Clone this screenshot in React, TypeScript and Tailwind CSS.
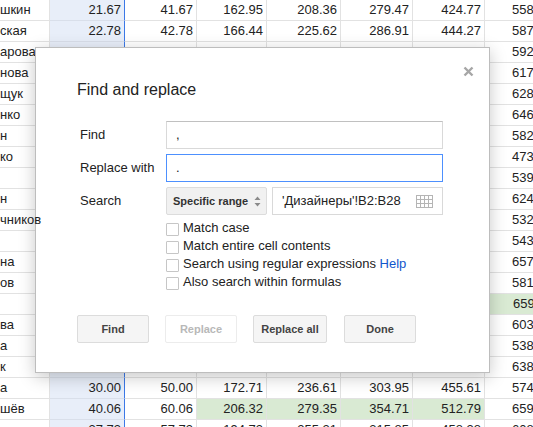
import React from "react";

const NAMES = [
  "шкин", "ская", "арова", "нова", "щук", "нко", "н", "ко", "", "н", "чников",
  "", "на", "ов", "", "ва", "а", "к", "а", "шёв", "ова",
];

const LAST = [
  "5587.42", "5873.10", "5921.64", "6170.25", "6281.93", "6463.08", "5826.71",
  "4731.56", "5394.20", "6245.87", "5320.14", "5436.92", "6572.35", "5813.47",
  "6598.11", "6037.66", "5385.29", "6389.74", "5746.50", "6591.03", "6085.48",
];

const KNOWN: Record<number, string[]> = {
  0: ["21.67", "41.67", "162.95", "208.36", "279.47", "424.77"],
  1: ["22.78", "42.78", "166.44", "225.62", "286.91", "444.27"],
  18: ["30.00", "50.00", "172.71", "236.61", "303.95", "455.61"],
  19: ["40.06", "60.06", "206.32", "279.35", "354.71", "512.79"],
  20: ["37.73", "57.73", "194.73", "255.21", "315.85", "458.38"],
};

function rowValues(i: number) {
  if (KNOWN[i]) return [...KNOWN[i], LAST[i]];
  const a = 20 + ((i * 37) % 17) + 0.33;
  const vals = [a, a + 20, a * 4 + 70, a * 5 + 110, a * 6 + 150, a * 9 + 230];
  return [...vals.map((v) => v.toFixed(2)), LAST[i]];
}

const COLS = [
  "w-[72px]",
  "w-[70px]",
  "w-[74px]",
  "w-[72px]",
  "w-[72px]",
  "w-[78px]",
];

function isGreen(r: number, c: number) {
  if (r === 19 && c >= 2 && c <= 5) return true;
  if (r === 14 && c === 6) return true;
  return false;
}

function Sheet() {
  return (
    <div className="flex flex-col">
      {NAMES.map((name, r) => {
        const vals = rowValues(r);
        return (
          <div key={r} className="flex h-[21px] shrink-0">
            <div className="w-[50px] shrink-0 border-r border-b border-[#e2e2e2] leading-[20px] whitespace-nowrap">
              <span className={r === 10 ? "relative z-30" : ""}>{name}</span>
            </div>
            <div className="w-[75px] shrink-0 bg-[#e8eef9] border-b border-b-[#d9dfea] border-r border-r-[#3b78e7] leading-[20px] text-right pr-[3px]">
              {vals[0]}
            </div>
            {vals.slice(1).map((v, c) => (
              <div
                key={c}
                className={`${COLS[c]} shrink-0 border-r border-b border-[#e2e2e2] leading-[20px] text-right pr-[3px] whitespace-nowrap ${
                  isGreen(r, c + 1) ? "bg-[#d9ead3]" : "bg-white"
                }`}
              >
                {v}
              </div>
            ))}
          </div>
        );
      })}
    </div>
  );
}

function Checkbox({ children }: { children: React.ReactNode }) {
  return (
    <div className="flex items-center h-[18px]">
      <span className="w-[13px] h-[13px] border border-[#c6c6c6] bg-white rounded-[1px] mt-[3px] mr-[4px] shrink-0" />
      <span className="leading-[18px]">{children}</span>
    </div>
  );
}

function GridIcon() {
  return (
    <svg width="17" height="13" viewBox="0 0 17 13" className="shrink-0">
      <g stroke="#b5b5b5" strokeWidth="1" fill="none">
        <rect x="0.5" y="0.5" width="16" height="12" />
        <line x1="4.5" y1="0.5" x2="4.5" y2="12.5" />
        <line x1="8.5" y1="0.5" x2="8.5" y2="12.5" />
        <line x1="12.5" y1="0.5" x2="12.5" y2="12.5" />
        <line x1="0.5" y1="4.5" x2="16.5" y2="4.5" />
        <line x1="0.5" y1="8.5" x2="16.5" y2="8.5" />
      </g>
    </svg>
  );
}

function Dialog() {
  const btn =
    "h-[28px] rounded-[2px] border text-[11px] font-bold flex items-center justify-center";
  return (
    <div className="absolute left-[35px] top-[47px] w-[455px] h-[326px] bg-white border border-[#bdbdbd] shadow-[0_4px_16px_rgba(0,0,0,0.22)] z-20 text-[#222]">
      <svg
        width="11"
        height="11"
        viewBox="0 0 11 11"
        className="absolute left-[427px] top-[18px]"
      >
        <path d="M1.5 1.5 L9.5 9.5 M9.5 1.5 L1.5 9.5" stroke="#a6a6a6" strokeWidth="2.4" />
      </svg>
      <div className="pl-[41px] pt-[32px]">
        <div className="text-[16px] leading-[20px]">Find and replace</div>

        <div className="mt-[21px] flex items-center">
          <div className="w-[89px] pl-[3px]">Find</div>
          <div className="w-[277px] h-[28px] border border-[#d9d9d9] border-t-[#c0c0c0] pl-[9px] leading-[26px]">
            ,
          </div>
        </div>

        <div className="mt-[5px] flex items-center">
          <div className="w-[89px] pl-[3px]">Replace with</div>
          <div className="w-[277px] h-[28px] border border-[#4d90fe] pl-[9px] leading-[26px]">
            .
          </div>
        </div>

        <div className="mt-[5px] flex items-center">
          <div className="w-[89px] pl-[3px]">Search</div>
          <div className="w-[101px] h-[28px] border border-[#dcdcdc] bg-[#f1f1f1] rounded-[2px] flex items-center pl-[6px] gap-[6px] text-[11px] font-bold text-[#333]">
            Specific range
            <svg width="7" height="11" viewBox="0 0 7 11">
              <path d="M3.5 0.5 L6.5 4 L0.5 4 Z M3.5 10.5 L6.5 7 L0.5 7 Z" fill="#8a8a8a" />
            </svg>
          </div>
          <div className="ml-[5px] w-[171px] h-[28px] border border-[#d9d9d9] flex items-center pl-[9px] pr-[9px] justify-between">
            <span>'Дизайнеры'!B2:B28</span>
            <GridIcon />
          </div>
        </div>

        <div className="mt-[4px] ml-[89px] flex flex-col">
          <Checkbox>Match case</Checkbox>
          <Checkbox>Match entire cell contents</Checkbox>
          <Checkbox>
            Search using regular expressions <span className="text-[#1155cc]">Help</span>
          </Checkbox>
          <Checkbox>Also search within formulas</Checkbox>
        </div>

        <div className="mt-[24px] flex">
          <div className={`${btn} w-[72px] bg-[#f5f5f5] border-[#dcdcdc] text-[#444]`}>Find</div>
          <div className={`${btn} ml-[16px] w-[72px] bg-white border-[#ececec] text-[#b8b8b8]`}>
            Replace
          </div>
          <div className={`${btn} ml-[16px] w-[74px] bg-[#f5f5f5] border-[#dcdcdc] text-[#444]`}>
            Replace all
          </div>
          <div className={`${btn} ml-[17px] w-[72px] bg-[#f5f5f5] border-[#dcdcdc] text-[#444]`}>Done</div>
        </div>
      </div>
    </div>
  );
}

export default function App() {
  return (
    <div
      className="relative w-[533px] h-[427px] overflow-hidden bg-white text-[13px] text-[#222]"
      style={{ fontFamily: '"Liberation Sans", Arial, sans-serif' }}
    >
      <Sheet />
      <Dialog />
    </div>
  );
}
